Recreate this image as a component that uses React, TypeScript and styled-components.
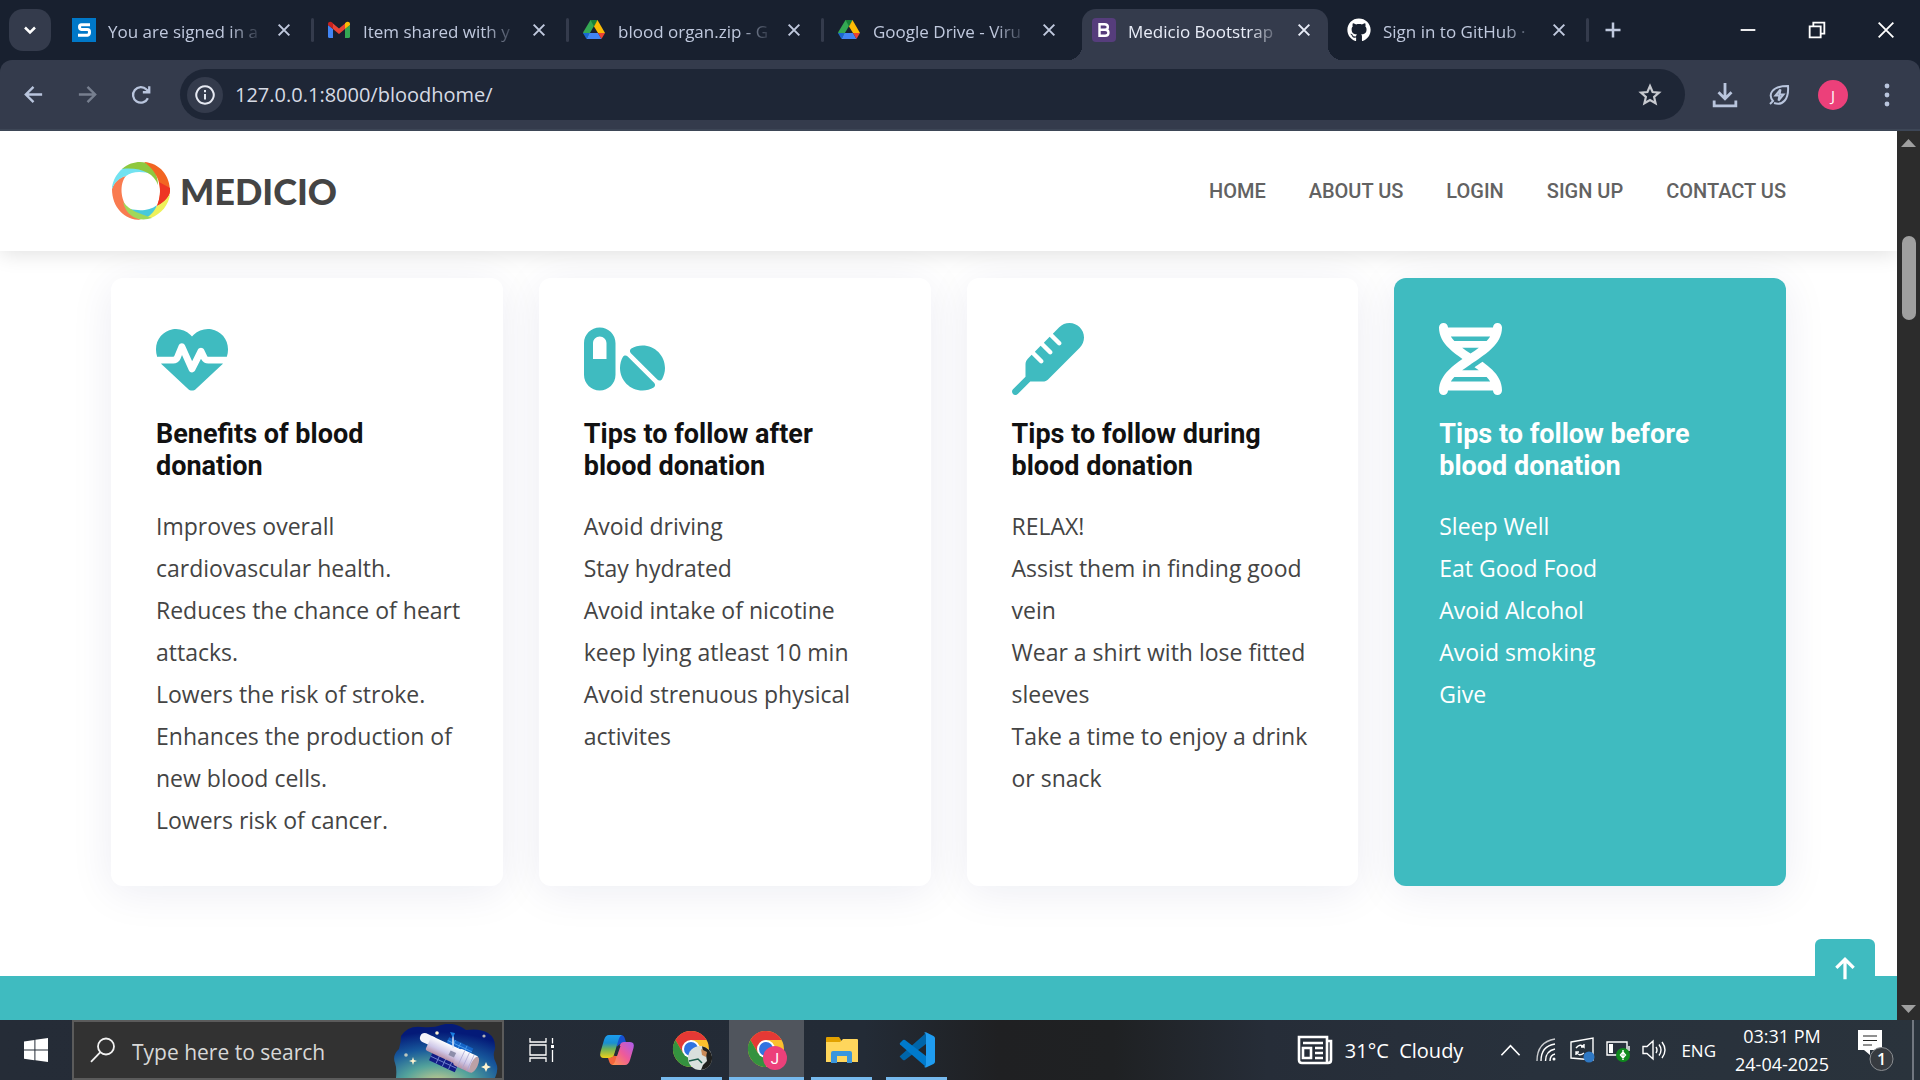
import React from "react";
import styled, { createGlobalStyle, css } from "styled-components";
import { FaDna, FaHeartPulse, FaPills, FaThermometer, FaGithub } from "react-icons/fa6";
import type { IconType } from "react-icons";

const teal = "#3fbbc0";
const uiFont = `"Open Sans", "Noto Sans", sans-serif`;

const GlobalStyle = createGlobalStyle`
  *, *::before, *::after { box-sizing: border-box; }
  body { margin: 0; overflow: hidden; font-family: "Open Sans", sans-serif; }
  button { border: 0; padding: 0; background: none; color: inherit; font: inherit; cursor: pointer; }
  h3, p, ul { margin: 0; padding: 0; }
  svg { display: block; flex: none; }
`;

const Screen = styled.div`
  display: grid;
  grid-template-rows: auto auto minmax(0, 1fr) auto;
  height: 100vh;
  background: #18202f;
`;

/* ---------- tab strip ---------- */

const TabStrip = styled.header`
  display: flex;
  height: 60px;
  color: #c0c9de;
  font-family: ${uiFont};
`;

const TabSearch = styled.button`
  width: 42px;
  height: 42px;
  margin: 9px 6px 9px 9px;
  border-radius: 14px;
  background: #343b4c;
  display: grid;
  place-items: center;
  color: #fff;
`;

const Tabs = styled.div`
  display: flex;
  min-width: 0;
`;

const Tab = styled.div<{ $active?: boolean; $line?: boolean }>`
  position: relative;
  width: 255px;
  min-width: 0;
  display: flex;
  align-items: center;
  gap: 12px;
  padding: 0 19px 0 15px;
  ${(p) =>
    p.$line &&
    css`
      &::after {
        content: "";
        position: absolute;
        right: -2px;
        top: 18px;
        width: 3px;
        height: 24px;
        border-radius: 2px;
        background: #343b4c;
      }
    `}
  ${(p) =>
    p.$active &&
    css`
      color: #e9edf8;
      isolation: isolate;
      &::before {
        content: "";
        position: absolute;
        z-index: -1;
        inset: 9px 4px 0 5px;
        border-radius: 14px 14px 0 0;
        background: #343b4c;
      }
      &::after {
        content: "";
        position: absolute;
        z-index: -1;
        left: -9px;
        right: -10px;
        bottom: 0;
        height: 14px;
        background: radial-gradient(circle at 0 0, transparent 14px, #343b4c 14px) left / 14px 14px no-repeat,
          radial-gradient(circle at 100% 0, transparent 14px, #343b4c 14px) right / 14px 14px no-repeat;
      }
    `}
`;

const TabTitle = styled.button`
  flex: 1;
  min-width: 0;
  white-space: nowrap;
  text-align: left;
  font-size: 17px;
  line-height: 28px;
  padding-top: 3px;
  mask-image: linear-gradient(to right, #000 calc(100% - 34px), transparent);
`;

const CloseTab = styled.button`
  width: 18px;
  height: 20px;
  display: grid;
  place-items: center;
`;

const NewTab = styled.button`
  width: 52px;
  display: grid;
  place-items: center;
`;

const WindowButtons = styled.div`
  display: flex;
  margin-left: auto;
  color: #fff;
`;

const WindowButton = styled.button`
  width: 69px;
  display: grid;
  place-items: center;
`;

/* ---------- toolbar ---------- */

const Toolbar = styled.div`
  display: flex;
  align-items: center;
  height: 71px;
  padding: 0 6px 0;
  background: #343b4c;
  border-bottom: 2px solid #3d4656;
  border-radius: 12px 12px 0 0;
  color: #b9c5dd;
  font-family: ${uiFont};
`;

const ToolButton = styled.button<{ $dim?: boolean }>`
  width: 54px;
  height: 51px;
  display: grid;
  place-items: center;
  color: ${(p) => (p.$dim ? "#777f8f" : "inherit")};
`;

const AddressBar = styled.div`
  flex: 1;
  display: flex;
  align-items: center;
  height: 51px;
  margin: 0 13px 0 12px;
  padding: 0 7px;
  border-radius: 26px;
  background: #1e2636;
`;

const SiteInfo = styled.button`
  width: 36px;
  height: 36px;
  border-radius: 50%;
  background: #343b4c;
  display: grid;
  place-items: center;
  color: #e6e9f2;
`;

const Address = styled.input`
  flex: 1;
  min-width: 0;
  margin-left: 10px;
  border: 0;
  outline: 0;
  background: none;
  color: #d6dae4;
  font: 20px ${uiFont};
`;

const StarButton = styled(SiteInfo)`
  margin-right: 10px;
  background: none;
  color: #c7c9cf;
`;

const Avatar = styled.span`
  width: 30px;
  height: 30px;
  border-radius: 50%;
  background: #ec407a;
  color: #fff;
  font-size: 15px;
  line-height: 30px;
`;

/* ---------- web page ---------- */

const Viewport = styled.div`
  display: flex;
  min-height: 0;
  background: #fff;
`;

const Page = styled.div`
  position: relative;
  flex: 1;
  min-width: 0;
  display: flex;
  flex-direction: column;
  overflow: hidden;
`;

const SiteHeader = styled.div`
  position: relative;
  z-index: 1;
  flex: none;
  display: flex;
  align-items: center;
  justify-content: space-between;
  height: 120px;
  padding: 0 111px;
  background: #fff;
  box-shadow: 0 3px 20px rgba(0, 0, 0, 0.12);
`;

const Brand = styled.a`
  display: flex;
  align-items: center;
  gap: 9px;
  color: #444;
  text-decoration: none;
  font: 900 36px/58px Lato, sans-serif;
`;

const Nav = styled.nav`
  display: flex;
  gap: 43px;
`;

const NavLink = styled.a`
  color: #626262;
  text-decoration: none;
  font: 500 20px/24px Roboto, sans-serif;
`;

const Services = styled.section`
  flex: none;
  display: grid;
  grid-template-columns: repeat(4, minmax(0, 1fr));
  gap: 36px;
  padding: 27px 111px 90px;
`;

const Card = styled.article<{ $filled?: boolean }>`
  padding: 45px;
  border-radius: 12px;
  box-shadow: 0 6px 44px rgba(8, 30, 100, 0.08);
  background: ${(p) => (p.$filled ? teal : "#fff")};
  color: ${(p) => (p.$filled ? "#fff" : "#444")};
  --title: ${(p) => (p.$filled ? "#fff" : "#111")};
  --icon: ${(p) => (p.$filled ? "#fff" : teal)};
`;

const CardIcon = styled.div<{ $width: number }>`
  color: var(--icon);

  > svg {
    width: ${(p) => p.$width}px;
    height: 72px;
  }
`;

const CardTitle = styled.h3`
  margin: 23px 0;
  color: var(--title);
  font: 700 27px/32px Roboto, sans-serif;
`;

const CardList = styled.ul`
  margin-right: -8px;
  list-style: none;
  font-size: 23px;
  line-height: 42px;
`;

const CallToAction = styled.section`
  flex: 1;
  background: ${teal};
`;

const BackToTop = styled.a`
  position: absolute;
  right: 22px;
  bottom: 21px;
  width: 60px;
  height: 60px;
  border-radius: 6px;
  background: ${teal};
  color: #fff;
  display: grid;
  place-items: center;
`;

const Scrollbar = styled.div`
  width: 23px;
  display: flex;
  flex-direction: column;
  align-items: center;
  padding: 8px 0 7px;
  background: #2c2c2c;
  color: #9f9f9f;
`;

const Thumb = styled.div`
  width: 14px;
  height: 84px;
  margin: 89px 0 auto;
  border-radius: 7px;
  background: #9f9f9f;
`;

/* ---------- taskbar ---------- */

const Taskbar = styled.footer`
  display: flex;
  height: 60px;
  background: linear-gradient(90deg, #252c37 0, #232b36 45%, #1f2022 52%, #1f2123 58%, #262d38 66%, #28313c 80%, #2a333c);
  color: #fff;
  font-family: ${uiFont};
`;

const StartButton = styled.button`
  width: 72px;
  display: grid;
  place-items: center;
`;

const SearchBox = styled.label`
  width: 432px;
  display: flex;
  align-items: center;
  padding-left: 16px;
  border: 2px solid #5b5b5b;
  background: #323232;
`;

const SearchInput = styled.input`
  flex: 1;
  min-width: 0;
  margin-left: 16px;
  padding: 3px 0 0;
  border: 0;
  outline: 0;
  background: none;
  font: 21px ${uiFont};
  &::placeholder {
    color: #d8d8d8;
    opacity: 1;
  }
`;

const SearchArt = styled.svg`
  margin-right: 4px;
  align-self: flex-end;
`;

const Apps = styled.div`
  display: flex;
`;

const AppButton = styled.button<{ $open?: boolean; $active?: boolean }>`
  position: relative;
  width: 75px;
  display: grid;
  place-items: center;
  ${(p) =>
    p.$open &&
    css`
      &::after {
        content: "";
        position: absolute;
        left: 7px;
        right: 7px;
        bottom: 0;
        height: 3px;
        background: #76b9ed;
      }
    `}
  ${(p) =>
    p.$active &&
    css`
      background: #50555d;
      &::after {
        left: 0;
        right: 0;
      }
    `}
`;

const Tray = styled.div`
  display: flex;
  align-items: center;
  margin-left: auto;
`;

const Weather = styled.button`
  display: flex;
  align-items: center;
  gap: 12px;
  font-size: 20px;
  white-space: pre;
  margin-right: 29px;
`;

const TrayButton = styled.button`
  width: 36px;
  height: 60px;
  display: grid;
  place-items: center;
`;

const Language = styled.button`
  margin-left: 9px;
  font-size: 17px;
`;

const Clock = styled.button`
  width: 132px;
  text-align: center;
  font-size: 18px;
  line-height: 28px;
`;

const Notifications = styled.button`
  width: 64px;
  height: 60px;
  padding-left: 9px;
  display: grid;
  align-items: center;
`;

const ShowDesktop = styled.button`
  width: 8px;
  height: 60px;
  border-left: 2px solid #717780;
`;

/* ---------- drawings ---------- */

type StrokeProps = { d: string; size?: number; width?: number };

const Stroke = ({ d, size = 24, width = 2 }: StrokeProps) => (
  <svg width={size} height={size} viewBox="0 0 24 24" fill="none" stroke="currentColor" strokeWidth={width}>
    <path d={d} />
  </svg>
);

const Favicons = {
  scribe: (
    <svg width="24" height="24" viewBox="0 0 24 24">
      <path fill="#0078c8" d="M0 0h24v24H0z" />
      <path d="M18 6.800H9.500Q7.500 6.800 7.500 9T9.500 11.500H15.500Q17.500 11.500 17.500 14.200T15.500 17.200H6" fill="none" stroke="#fff" strokeWidth="3" />
    </svg>
  ),
  mail: (
    <svg width="24" height="24" viewBox="0 0 24 24">
      <path fill="#4285f4" d="M1 7l5 4v9H2.500Q1 20 1 18.500z" />
      <path fill="#34a853" d="M18 11l5-4v11.500Q23 20 21.500 20H18z" />
      <path fill="#ea4335" d="M6 5.500l6 5 6-5V11l-6 5-6-5z" />
      <path fill="#c5221f" d="M1 7V6C1 3.600 4 3 5.500 4.800L6 5.300V11z" />
      <path fill="#fbbc04" d="M23 7V6c0-2.400-3-3-4.500-1.200l-.5.500V11z" />
    </svg>
  ),
  drive: (
    <svg width="24" height="24" viewBox="0 0 24 24">
      <path fill="#34a853" d="M8.500 2h7L5 20 1 14.500z" />
      <path fill="#188038" d="M8.500 2h7L12 8.500z" />
      <path fill="#fbbc04" d="M15.500 2l7.500 13h-7L12 8.500z" />
      <path fill="#4285f4" d="M7.500 15H16l3.500 6h-15z" />
      <path fill="#1967d2" d="M1 15h6.500l-3 6z" />
      <path fill="#ea4335" d="M16 15h7l-3.500 6z" />
    </svg>
  ),
  bootstrap: (
    <svg width="24" height="24" viewBox="0 0 24 24">
      <rect width="24" height="24" rx="4" fill="#563d7c" />
      <path d="M7.500 6.200h5c4.500 0 4.500 5.500 0 5.500h-5zm0 5.500h5.600c4.500 0 4.500 6 0 6H7.500z" fill="none" stroke="#fff" strokeWidth="2.400" />
    </svg>
  ),
  github: <FaGithub size={24} color="#fff" />,
};

const LogoRing = () => (
  <svg width="60" height="60" viewBox="-1 -1 60 60">
    <path fill="#f97b50" d="M0 27C2 20 8 15 14 14 7 22 9 38 15 45 19 52 25 56 29 58 12 58 0 45 0 27z" />
    <path fill="#72e2f0" d="M0 25C2 14 9 6 16 4 24 4 34 5 40 12 30 9 20 9 14 14 7 16 3 20 0 27z" />
    <path fill="#8fc83e" d="M10 7C18 0 28-1 34 1 41 4 46 13 46 23 42 11 28 5 10 7z" />
    <path fill="#f26522" d="M32 0C48 1 58 14 58 29 58 35 51 41 45 44 51 30 49 12 32 0z" />
    <path fill="#ee3524" d="M47 20L58 26C59 35 51 42 45 44 48 36 49 29 47 20z" />
    <path fill="#eef15a" d="M58 32C57 43 49 52 39 56 33 56 34 51 45 44 51 41 55 37 58 32z" />
    <path fill="#48c9dc" d="M18 47C27 49 38 49 45 43 43 49 38 54 34 56 28 56 22 52 18 47z" />
    <path fill="#a0d85a" d="M11 40C18 49 29 52 40 56 28 60 15 56 11 40z" />
  </svg>
);

const Chrome = ({ children }: { children: React.ReactNode }) => (
  <svg width="42" height="42" viewBox="0 0 42 42">
    <circle cx="20" cy="20" r="18" fill="#fbc02d" />
    <path fill="#e53935" d="M4.400 11A18 18 0 0 1 35.600 11H20L12 24z" />
    <path fill="#34923f" d="M4.400 11A18 18 0 0 0 20 38L28 24H12z" />
    <circle cx="20" cy="20" r="9" fill="#fff" />
    <circle cx="20" cy="20" r="7" fill="#2f73e0" />
    {children}
  </svg>
);

const Copilot = () => (
  <svg width="36" height="34" viewBox="0 0 36 34">
    <defs>
      <linearGradient id="copilotLeft" x1="0" y1="0" x2="0" y2="1">
        <stop offset="0" stopColor="#1b9df0" />
        <stop offset=".35" stopColor="#1a8fd0" />
        <stop offset=".6" stopColor="#6cb15a" />
        <stop offset="1" stopColor="#f0cf1a" />
      </linearGradient>
      <linearGradient id="copilotRight" x1="1" y1="0" x2="0" y2="1">
        <stop offset="0" stopColor="#a95cf0" />
        <stop offset=".5" stopColor="#ee5a9a" />
        <stop offset="1" stopColor="#ff9a4a" />
      </linearGradient>
    </defs>
    <path fill="#1650d0" d="M18 2h4q3 0 4 4l1.500 5h-5Q19 11 18 15z" />
    <path fill="url(#copilotLeft)" d="M10 2h13q-2.500 1-3.500 5l-4.500 15q-1 3-4 3H5q-5 0-3.500-6L5 7q1.500-5 5-5z" />
    <path fill="#f4663c" d="M18 32h-4q-3 0-4-4l-1-3q5 0 6-3l6-1z" />
    <path fill="url(#copilotRight)" d="M26 32H13q2.500-1 3.500-5L21 12q1-3 4-3h6q5 0 3.500 6L31 27q-1.500 5-5 5z" />
    <path fill="#252c37" d="M18.500 13h3L18 23h-3z" />
  </svg>
);

const Telescope = () => (
  <SearchArt width="104" height="54" viewBox="0 0 104 54" aria-hidden="true">
    <defs>
      <radialGradient id="sky" cx="42%" cy="110%" r="95%">
        <stop offset="0" stopColor="#d2cf8c" />
        <stop offset=".35" stopColor="#54a39b" />
        <stop offset=".68" stopColor="#17579b" />
        <stop offset="1" stopColor="#041a78" />
      </radialGradient>
      <linearGradient id="tube" x1="0" y1="0" x2="0" y2="1">
        <stop offset="0" stopColor="#fff" />
        <stop offset=".6" stopColor="#cfc8e8" />
        <stop offset="1" stopColor="#b892a8" />
      </linearGradient>
    </defs>
    <path fill="url(#sky)" d="M2 54Q3 44 1 39-2 31 5 25 7 18 7 12 14 1 28 3 40 4 47 1 60-3 72 6 86 4 94 9 102 14 101 25 98 32 102 39 105 45 101 54z" />
    <g transform="translate(54 28) rotate(25) scale(.86) translate(-50 -24)">
      <rect x="44" y="8" width="31" height="9" fill="#1464c8" />
      <path d="M44 12h31M52 8v9M59 8v9M67 8v9" stroke="#4b9dec" strokeWidth="1" />
      <rect x="34" y="32" width="33" height="10" fill="#121c86" />
      <path d="M34 37h33M43 32v10M51 32v10M59 32v10" stroke="#7285cf" strokeWidth="1" />
      <rect x="13" y="15" width="20" height="11" rx="5" fill="#f5f3fa" />
      <rect x="25" y="15" width="42" height="18" rx="2" fill="url(#tube)" />
      <rect x="61" y="14" width="24" height="21" rx="3" fill="url(#tube)" />
      <ellipse cx="84" cy="24.500" rx="4" ry="10" fill="#bba1a6" />
      <path d="M67 14v21M73 14v21M79 14v21" stroke="#a9a4cf" strokeWidth=".8" />
      <rect x="52" y="21" width="7" height="6" fill="#8d8eaa" />
    </g>
    <path d="M59 24V11" stroke="#dbe5fa" strokeWidth="1.500" />
    <path d="M56 8l5 1-2 5z" fill="#1b7ee0" />
    <g fill="#fff3cf">
      <circle cx="43" cy="9" r="1.800" />
      <circle cx="90" cy="12" r="1.600" opacity=".7" />
      <circle cx="12" cy="31" r="1.800" opacity=".7" />
      <path d="M19 33l1 3 3 1-3 1-1 3-1-3-3-1 3-1zM92 38l1.500 3.500L97 43l-3.500 1.500L92 48l-1.500-3.500L87 43l3.500-1.500z" />
    </g>
  </SearchArt>
);

/* ---------- content ---------- */

const tabs: { title: string; icon: keyof typeof Favicons; active?: boolean; line?: boolean }[] = [
  { title: "You are signed in a", icon: "scribe", line: true },
  { title: "Item shared with y", icon: "mail", line: true },
  { title: "blood organ.zip - G", icon: "drive", line: true },
  { title: "Google Drive - Viru", icon: "drive" },
  { title: "Medicio Bootstrap", icon: "bootstrap", active: true },
  { title: "Sign in to GitHub ·", icon: "github", line: true },
];

const links = ["Home", "About Us", "Login", "Sign Up", "Contact Us"];

const cards: { title: string; icon: IconType; iconWidth: number; lines: string[]; filled?: boolean }[] = [
  {
    title: "Benefits of blood donation",
    icon: FaHeartPulse,
    iconWidth: 72,
    lines: [
      "Improves overall cardiovascular health.",
      "Reduces the chance of heart attacks.",
      "Lowers the risk of stroke.",
      "Enhances the production of new blood cells.",
      "Lowers risk of cancer.",
    ],
  },
  {
    title: "Tips to follow after blood donation",
    icon: FaPills,
    iconWidth: 81,
    lines: [
      "Avoid driving",
      "Stay hydrated",
      "Avoid intake of nicotine",
      "keep lying atleast 10 min",
      "Avoid strenuous physical activites",
    ],
  },
  {
    title: "Tips to follow during blood donation",
    icon: FaThermometer,
    iconWidth: 72,
    lines: [
      "RELAX!",
      "Assist them in finding good vein",
      "Wear a shirt with lose fitted sleeves",
      "Take a time to enjoy a drink or snack",
    ],
  },
  {
    title: "Tips to follow before blood donation",
    icon: FaDna,
    iconWidth: 63,
    filled: true,
    lines: ["Sleep Well", "Eat Good Food", "Avoid Alcohol", "Avoid smoking", "Give"],
  },
];

export default function App() {
  return (
    <>
      <GlobalStyle />
      <Screen>
        <TabStrip>
          <TabSearch aria-label="Search tabs">
            <Stroke d="M6 9l6 6 6-6" size={20} width={3} />
          </TabSearch>
          <Tabs>
            {tabs.map((tab) => (
              <Tab key={tab.title} $active={tab.active} $line={tab.line}>
                {Favicons[tab.icon]}
                <TabTitle>{tab.title}</TabTitle>
                <CloseTab aria-label="Close tab">
                  <Stroke d="M4 4l16 16M20 4L4 20" size={16} width={3} />
                </CloseTab>
              </Tab>
            ))}
          </Tabs>
          <NewTab aria-label="New tab">
            <Stroke d="M12 3v18M3 12h18" size={20} width={3} />
          </NewTab>
          <WindowButtons>
            <WindowButton aria-label="Minimize">
              <Stroke d="M4 12h16" size={22} width={2} />
            </WindowButton>
            <WindowButton aria-label="Restore">
              <Stroke d="M4 8h12v12H4zM8 8V4h12v12h-4" size={22} />
            </WindowButton>
            <WindowButton aria-label="Close">
              <Stroke d="M4 4l16 16M20 4L4 20" size={22} />
            </WindowButton>
          </WindowButtons>
        </TabStrip>

        <Toolbar>
          <ToolButton aria-label="Back">
            <Stroke d="M21 12H4M12 4l-8 8 8 8" size={23} width={2.5} />
          </ToolButton>
          <ToolButton aria-label="Forward" $dim>
            <Stroke d="M3 12h17M12 4l8 8-8 8" size={23} width={2.5} />
          </ToolButton>
          <ToolButton aria-label="Reload">
            <Stroke d="M19.500 15.500A8.500 8.500 0 1 1 18 6l3 3M21 2.500V9h-7" size={22} width={2.5} />
          </ToolButton>
          <AddressBar>
            <SiteInfo aria-label="Site information">
              <Stroke d="M12 2.500a9.500 9.500 0 1 0 .01 0zM12 11v6M12 6.500V9" size={22} width={2.2} />
            </SiteInfo>
            <Address aria-label="Address" defaultValue="127.0.0.1:8000/bloodhome/" />
            <StarButton aria-label="Bookmark">
              <Stroke d="M12 3l2.600 6 6.400.6-4.900 4.300 1.500 6.400L12 17l-5.600 3.300 1.500-6.400L3 9.600 9.400 9z" width={2.2} />
            </StarButton>
          </AddressBar>
          <ToolButton aria-label="Downloads">
            <Stroke d="M12 1v14M6 9.500l6 6 6-6M2 17v5h20v-5" size={26} width={2.6} />
          </ToolButton>
          <ToolButton aria-label="Energy saver">
            <Stroke d="M3 21l3-3C1 12 4 3 21 3c1 13-5 20-14 17M13.500 6.500l-5 6h4l-1 5 5-6h-4z" width={2} />
          </ToolButton>
          <ToolButton aria-label="Profile">
            <Avatar>J</Avatar>
          </ToolButton>
          <ToolButton aria-label="Menu">
            <svg width="6" height="26" viewBox="0 0 6 26" fill="currentColor">
              <circle cx="3" cy="4" r="2.400" />
              <circle cx="3" cy="13" r="2.400" />
              <circle cx="3" cy="22" r="2.400" />
            </svg>
          </ToolButton>
        </Toolbar>

        <Viewport>
          <Page>
            <SiteHeader>
              <Brand href="#">
                <LogoRing />
                MEDICIO
              </Brand>
              <Nav>
                {links.map((link) => (
                  <NavLink key={link} href="#">
                    {link.toUpperCase()}
                  </NavLink>
                ))}
              </Nav>
            </SiteHeader>
            <Services>
              {cards.map(({ title, icon: Icon, iconWidth, lines, filled }) => (
                <Card key={title} $filled={filled}>
                  <CardIcon $width={iconWidth}>
                    <Icon />
                  </CardIcon>
                  <CardTitle>{title}</CardTitle>
                  <CardList>
                    {lines.map((line) => (
                      <li key={line}>{line}</li>
                    ))}
                  </CardList>
                </Card>
              ))}
            </Services>
            <CallToAction />
            <BackToTop href="#" aria-label="Back to top">
              <Stroke d="M12 21.500V3M4 11l8-8 8 8" size={26} width={3} />
            </BackToTop>
          </Page>
          <Scrollbar>
            <svg width="15" height="8" viewBox="0 0 15 8">
              <path fill="currentColor" d="M0 8L7.500 0 15 8z" />
            </svg>
            <Thumb />
            <svg width="15" height="8" viewBox="0 0 15 8">
              <path fill="currentColor" d="M0 0h15L7.500 8z" />
            </svg>
          </Scrollbar>
        </Viewport>

        <Taskbar>
          <StartButton aria-label="Start">
            <svg width="24" height="24" viewBox="0 0 24 24" fill="#fff">
              <path d="M0 3.400l10.400-1.500v9.700H0zM11.400 1.700L24 0v11.600H11.400zM0 12.500h10.400v9.700L0 20.700zM11.400 12.500H24V24l-12.600-1.700z" />
            </svg>
          </StartButton>
          <SearchBox>
            <svg width="26" height="26" viewBox="0 0 26 26" fill="none" stroke="#f2f2f2" strokeWidth="1.800">
              <circle cx="16" cy="9.500" r="8" />
              <path d="M10.400 15.200L1 24.800" />
            </svg>
            <SearchInput aria-label="Search" placeholder="Type here to search" />
            <Telescope />
          </SearchBox>
          <Apps>
            <AppButton aria-label="Task view">
              <svg width="25" height="24" viewBox="0 0 25 24" fill="none" stroke="#fff" strokeWidth="1.300">
                <path d="M1 0v4h16V0M1 7h16v10H1zM1 24v-4h16v4M23.500 0v5.500M23.500 12v12" />
                <path fill="#fff" stroke="none" d="M22 7h3v3h-3z" />
              </svg>
            </AppButton>
            <AppButton aria-label="Copilot">
              <Copilot />
            </AppButton>
            <AppButton aria-label="Chrome" $open>
              <Chrome>
                <circle cx="29" cy="29" r="12" fill="#d9e0dd" />
                <path fill="#20201e" d="M31 17.200A12 12 0 0 1 34 40l-4 1 2-5 4-4-1-6-3-3z" />
                <path fill="#c98a58" d="M30 20l6 3-1 5-4-2z" />
                <path fill="none" stroke="#1c5b4a" strokeWidth="1.500" d="M18 32l9-2 4 4" />
              </Chrome>
            </AppButton>
            <AppButton aria-label="Chrome, profile J" $open $active>
              <Chrome>
                <circle cx="29" cy="29" r="12" fill="#ec407a" />
                <text x="29" y="35" textAnchor="middle" fill="#fff" fontSize="15" fontFamily="Roboto, sans-serif">
                  J
                </text>
              </Chrome>
            </AppButton>
            <AppButton aria-label="File Explorer" $open>
              <svg width="34" height="28" viewBox="0 0 34 28">
                <path fill="#e2a100" d="M1 2q0-1 1-1h12l2 3v4H1z" />
                <path fill="#ffd65c" d="M1 6h14l3-3h14q1 0 1 1v22H1z" />
                <path fill="#3a96dd" d="M6 27V17q0-2 2-2h17q2 0 2 2v10h-5v-7H12v7z" />
              </svg>
            </AppButton>
            <AppButton aria-label="Visual Studio Code" $open>
              <svg width="36" height="36" viewBox="0 0 36 36">
                <path fill="#0065a9" d="M1 25l3 3q1 .6 2 0L27 12V1L1 24q-.6.500 0 1z" />
                <path fill="#007acc" d="M1 11l3-3q1-.6 2 0l21 16v11L1 12.500q-.6-.7 0-1.500z" />
                <path fill="#1f9cf0" d="M27 35.500q-1.200.2-2-.7 2 0 2-2V3q0-2-2-2 .8-.9 2-.700l7.500 3.700Q36 4.800 36 6.200v23.600q0 1.400-1.500 2.200z" />
              </svg>
            </AppButton>
          </Apps>
          <Tray>
            <Weather>
              <svg width="36" height="30" viewBox="0 0 36 30" fill="none" stroke="#fff" strokeWidth="2.600">
                <path d="M2 2h28v26H5q-3 0-3-3zM30 6h4v19q0 3-3 3h-3M6 8h20M6 13h8v10H6zM18 13h8M18 18h8M18 23h8" />
              </svg>
              {"31°C  Cloudy"}
            </Weather>
            <TrayButton aria-label="Show hidden icons">
              <Stroke d="M2.500 17L12 7l9.500 10" size={23} width={1.7} />
            </TrayButton>
            <TrayButton aria-label="Network">
              <svg width="20" height="24" viewBox="0 0 20 24" fill="none" stroke="#fff" strokeWidth="1.400">
                <path d="M1 23Q1 4 19 1" opacity=".75" />
                <path d="M5 23Q5 8 19 6M9.500 23q0-10 9.500-12M14 23q0-6 5-7" />
                <circle cx="18" cy="21" r="1.500" fill="#fff" stroke="none" />
              </svg>
            </TrayButton>
            <TrayButton aria-label="Sync status">
              <svg width="26" height="26" viewBox="0 0 26 26" fill="none" stroke="#fff" strokeWidth="1.400">
                <path d="M2 5l22-4v22l-22-2zM7 11q4-5 8-1v-3m0 3h-3M7 18v-3h3m-3 0q3 5 8 1" />
                <circle cx="20" cy="20" r="5.500" fill="#2f78c4" stroke="none" />
              </svg>
            </TrayButton>
            <TrayButton aria-label="Battery">
              <svg width="24" height="24" viewBox="0 0 24 24" fill="none" stroke="#fff" strokeWidth="1.400">
                <path d="M1 4h20v13H1zM23 8v5" />
                <path d="M3 6h4v9H3z" fill="#fff" stroke="none" />
                <circle cx="17" cy="17" r="7" fill="#0f8a1d" stroke="none" />
                <path d="M17 12v10M14.500 17l2.500-3 2.500 3-2.500 3z" />
              </svg>
            </TrayButton>
            <TrayButton aria-label="Volume">
              <svg width="24" height="22" viewBox="0 0 24 22" fill="none" stroke="#fff" strokeWidth="1.400">
                <path d="M1 7.500h4l6-5.500v18l-6-5.500H1zM14 8q2 3 0 6M17 5.500q4 5.500 0 11M20 3q6 8 0 16" />
              </svg>
            </TrayButton>
            <Language>ENG</Language>
            <Clock>
              03:31 PM
              <br />
              24-04-2025
            </Clock>
            <Notifications aria-label="1 new notification">
              <svg width="38" height="44" viewBox="0 -6 38 44">
                <path fill="#fff" d="M1-4h24v20H13v5l-6-5H1z" />
                <path stroke="#222" strokeWidth="1.200" d="M6 2h14M6 6.500h14M6 11h9" />
                <circle cx="24.500" cy="25" r="11.500" fill="#373b40" stroke="#8a8d91" />
                <text x="24.500" y="31" textAnchor="middle" fill="#fff" fontSize="16" fontWeight="600" fontFamily="Open Sans, sans-serif">
                  1
                </text>
              </svg>
            </Notifications>
            <ShowDesktop aria-label="Show desktop" />
          </Tray>
        </Taskbar>
      </Screen>
    </>
  );
}
